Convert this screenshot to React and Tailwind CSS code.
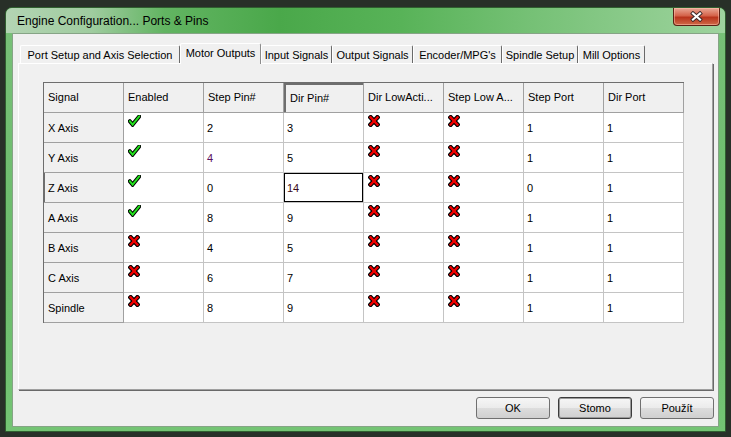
import React from "react";

const Check = () => (
  <svg width="13" height="12" viewBox="0 0 13 12" className="block">
    <polyline points="1.8,6.2 4.6,9.6 11.2,1.4" fill="none" stroke="#000" strokeWidth="4" strokeLinejoin="miter" strokeLinecap="round" />
    <polyline points="1.8,6.2 4.6,9.6 11.2,1.4" fill="none" stroke="#22e01c" strokeWidth="2" strokeLinejoin="miter" strokeLinecap="round" />
  </svg>
);

const Cross = () => (
  <svg width="12" height="12" viewBox="0 0 12 12" className="block">
    <g fill="none" stroke="#000" strokeWidth="4.6" strokeLinecap="square">
      <line x1="2.6" y1="2.4" x2="9.4" y2="9.6" />
      <line x1="9.4" y1="2.4" x2="2.6" y2="9.6" />
    </g>
    <g fill="none" stroke="#f00000" strokeWidth="2.4" strokeLinecap="square">
      <line x1="2.6" y1="2.4" x2="9.4" y2="9.6" />
      <line x1="9.4" y1="2.4" x2="2.6" y2="9.6" />
    </g>
  </svg>
);

const rows = [
  { name: "X Axis", en: true, step: "2", dir: "3", sp: "1", dp: "1" },
  { name: "Y Axis", en: true, step: "4", dir: "5", sp: "1", dp: "1", stepColor: "text-[#5a1060]" },
  { name: "Z Axis", en: true, step: "0", dir: "14", sp: "0", dp: "1", current: true },
  { name: "A Axis", en: true, step: "8", dir: "9", sp: "1", dp: "1" },
  { name: "B Axis", en: false, step: "4", dir: "5", sp: "1", dp: "1" },
  { name: "C Axis", en: false, step: "6", dir: "7", sp: "1", dp: "1" },
  { name: "Spindle", en: false, step: "8", dir: "9", sp: "1", dp: "1" },
];

const tabs = [
  { label: "Port Setup and Axis Selection", w: "w-[160px]" },
  { label: "Motor Outputs", w: "w-[81px]", active: true },
  { label: "Input Signals", w: "w-[71px]" },
  { label: "Output Signals", w: "w-[81px]" },
  { label: "Encoder/MPG's", w: "w-[89px]" },
  { label: "Spindle Setup", w: "w-[76px]" },
  { label: "Mill Options", w: "w-[67px]" },
];

const headers = ["Signal", "Enabled", "Step Pin#", "Dir Pin#", "Dir LowActi...", "Step Low A...", "Step Port", "Dir Port"];

const hdr = "h-[30px] bg-[#f0f0f0] border-r border-b border-[#a0a0a0] flex items-center pl-[4px] text-black whitespace-nowrap overflow-hidden";
const dataText = "h-[30px] bg-white border-r border-b border-[#c4c4c4] flex items-center pl-[3px] pt-[1px]";
const dataIcon = "h-[30px] bg-white border-r border-b border-[#c4c4c4] pl-[4px] pt-[2px]";

export default function App() {
  return (
    <div className="w-[731px] h-[437px] overflow-hidden bg-[#283028] pt-[7px] pl-[5px] font-['Liberation_Sans',Arial,sans-serif]">
      <div className="w-[721px] h-[425px] rounded-t-[7px] border border-[#2f5f2f] bg-[linear-gradient(to_bottom,#78c078,#6cbc6c_60%,#74c474)] flex flex-col overflow-hidden">
        {/* title bar */}
        <div className="h-[25px] flex justify-between bg-[linear-gradient(to_right,#b3d4b3_0%,#9fcc9f_12%,#62b462_22%,#4aa84a_38%,#58b358_55%,#74c074_72%,#8ccb8c_88%,#9ed39e_100%)]">
          <div className="self-center pl-[11px] pt-[1px] text-[12px] text-black whitespace-nowrap">
            Engine Configuration... Ports &amp; Pins
          </div>
          <div className="mr-[5px] w-[47px] h-[18px] rounded-b-[4px] border border-[#5c2014] border-t-0 bg-[linear-gradient(to_bottom,#eaa896,#d4634a_45%,#b9341c_55%,#cf6a48)] shadow-[inset_0_0_0_1px_rgba(255,200,180,0.5)] flex items-center justify-center">
            <svg width="13" height="11" viewBox="0 0 13 11">
              <g stroke="#3a2a2a" strokeWidth="4" strokeLinecap="square">
                <line x1="3" y1="2.5" x2="10" y2="8.5" />
                <line x1="10" y1="2.5" x2="3" y2="8.5" />
              </g>
              <g stroke="#fff" strokeWidth="2.2" strokeLinecap="square">
                <line x1="3" y1="2.5" x2="10" y2="8.5" />
                <line x1="10" y1="2.5" x2="3" y2="8.5" />
              </g>
            </svg>
          </div>
        </div>

        {/* client area */}
        <div className="mx-[6px] h-[394px] bg-[#f0f0f0] border border-[#86a486] flex flex-col text-[11px] text-black">
          <div className="ml-[5px] mt-[9px]">
            {/* tabs */}
            <div className="h-[20px] flex items-end pl-[2px]">
              {tabs.map((t) =>
                t.active ? (
                  <div
                    key={t.label}
                    className={`${t.w} h-[21px] -mb-px relative z-10 bg-[#f0f0f0] border-t border-l border-white border-r border-r-[#8c8c8c] rounded-t-[2px] flex items-center justify-center pb-[2px] text-black whitespace-nowrap`}
                  >
                    {t.label}
                  </div>
                ) : (
                  <div
                    key={t.label}
                    className={`${t.w} h-[18px] bg-[#f0f0f0] border-t border-l border-white border-r border-r-[#6a6a6a] rounded-t-[2px] flex items-center justify-center pt-[1px] text-black whitespace-nowrap`}
                  >
                    {t.label}
                  </div>
                )
              )}
            </div>
            {/* panel */}
            <div className="w-[695px] h-[327px] bg-[#f0f0f0] border-t border-l border-white border-r border-b border-r-[#a0a0a0] border-b-[#a0a0a0] shadow-[1px_1px_0_#696969] pl-[24px] pt-[18px]">
              <div className="w-[641px] grid grid-cols-[repeat(8,80px)] border-l border-t border-[#6e6e6e]">
                {headers.map((h, i) => (
                  <div
                    key={h}
                    className={
                      i === 3
                        ? `${hdr} shadow-[inset_2px_2px_0_#6e6e6e] pl-[6px] pt-[2px]`
                        : hdr
                    }
                  >
                    {h}
                  </div>
                ))}
                {rows.map((r) => (
                  <React.Fragment key={r.name}>
                    <div className={r.current ? `${hdr} shadow-[inset_1px_0_0_#6e6e6e] pt-[1px]` : `${hdr} pt-[1px]`}>
                      {r.name}
                    </div>
                    <div className={dataIcon}>{r.en ? <Check /> : <Cross />}</div>
                    <div className={`${dataText} ${r.stepColor || "text-black"}`}>{r.step}</div>
                    <div
                      className={
                        r.current
                          ? `${dataText} shadow-[inset_0_0_0_1px_#000] text-[#3a0a18]`
                          : `${dataText} text-black`
                      }
                    >
                      {r.dir}
                    </div>
                    <div className={dataIcon}>
                      <Cross />
                    </div>
                    <div className={dataIcon}>
                      <Cross />
                    </div>
                    <div className={`${dataText} text-black`}>{r.sp}</div>
                    <div className={`${dataText} text-black`}>{r.dp}</div>
                  </React.Fragment>
                ))}
              </div>
            </div>
          </div>

          {/* buttons */}
          <div className="mt-[7px] mr-[4px] flex justify-end gap-[8px]">
            <button className="w-[74px] h-[22px] rounded-[3px] border border-[#707070] bg-[linear-gradient(to_bottom,#f6f6f6,#ebebeb_50%,#dddddd_51%,#cfcfcf)] text-[11px] text-black flex items-center justify-center">
              OK
            </button>
            <button className="w-[74px] h-[22px] rounded-[3px] border border-[#3c3c3c] shadow-[inset_0_0_0_1px_#9a9a9a] bg-[linear-gradient(to_bottom,#f6f6f6,#ebebeb_50%,#dddddd_51%,#cfcfcf)] text-[11px] text-black flex items-center justify-center">
              Stomo
            </button>
            <button className="w-[74px] h-[22px] rounded-[3px] border border-[#707070] bg-[linear-gradient(to_bottom,#f6f6f6,#ebebeb_50%,#dddddd_51%,#cfcfcf)] text-[11px] text-black flex items-center justify-center">
              Použít
            </button>
          </div>
        </div>
      </div>
    </div>
  );
}
